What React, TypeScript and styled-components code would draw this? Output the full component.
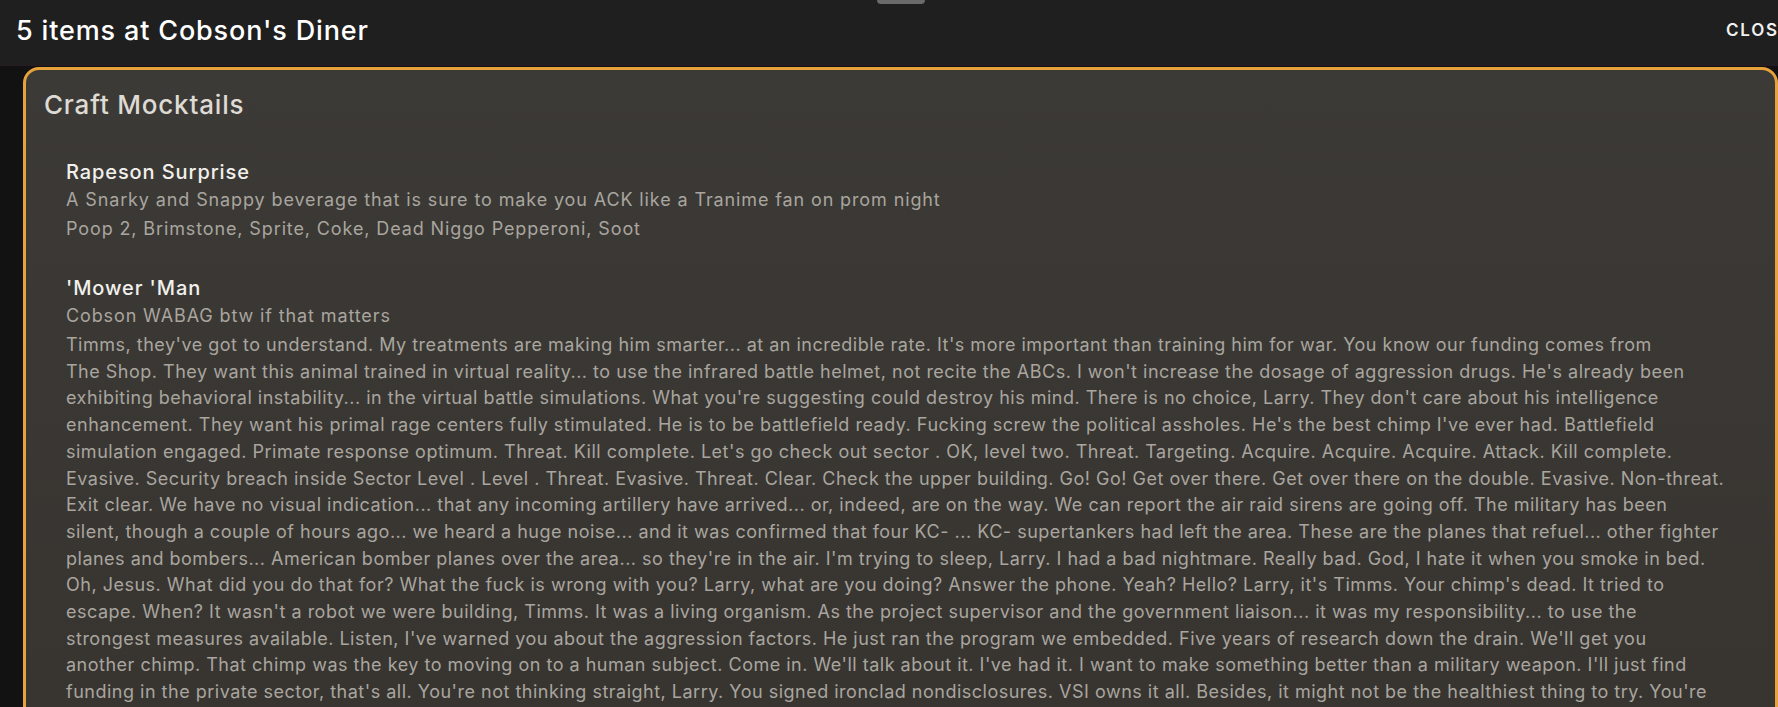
import styled, { createGlobalStyle } from "styled-components";

const GlobalStyle = createGlobalStyle`
  html, body {
    margin: 0;
    padding: 0;
    background: #121212;
    overflow: hidden;
  }
  body {
    font-family: Inter, "Open Sans", "Liberation Sans", sans-serif;
  }
`;

// the long blurb keeps the line breaks of the menu it was copied from
const mowerManText = [
  "Timms, they've got to understand. My treatments are making him smarter... at an incredible rate. It's more important than training him for war. You know our funding comes from",
  "The Shop. They want this animal trained in virtual reality... to use the infrared battle helmet, not recite the ABCs. I won't increase the dosage of aggression drugs. He's already been",
  "exhibiting behavioral instability... in the virtual battle simulations. What you're suggesting could destroy his mind. There is no choice, Larry. They don't care about his intelligence",
  "enhancement. They want his primal rage centers fully stimulated. He is to be battlefield ready. Fucking screw the political assholes. He's the best chimp I've ever had. Battlefield",
  "simulation engaged. Primate response optimum. Threat. Kill complete. Let's go check out sector . OK, level two. Threat. Targeting. Acquire. Acquire. Acquire. Attack. Kill complete.",
  "Evasive. Security breach inside Sector Level . Level . Threat. Evasive. Threat. Clear. Check the upper building. Go! Go! Get over there. Get over there on the double. Evasive. Non-threat.",
  "Exit clear. We have no visual indication... that any incoming artillery have arrived... or, indeed, are on the way. We can report the air raid sirens are going off. The military has been",
  "silent, though a couple of hours ago... we heard a huge noise... and it was confirmed that four KC- ... KC- supertankers had left the area. These are the planes that refuel... other fighter",
  "planes and bombers... American bomber planes over the area... so they're in the air. I'm trying to sleep, Larry. I had a bad nightmare. Really bad. God, I hate it when you smoke in bed.",
  "Oh, Jesus. What did you do that for? What the fuck is wrong with you? Larry, what are you doing? Answer the phone. Yeah? Hello? Larry, it's Timms. Your chimp's dead. It tried to",
  "escape. When? It wasn't a robot we were building, Timms. It was a living organism. As the project supervisor and the government liaison... it was my responsibility... to use the",
  "strongest measures available. Listen, I've warned you about the aggression factors. He just ran the program we embedded. Five years of research down the drain. We'll get you",
  "another chimp. That chimp was the key to moving on to a human subject. Come in. We'll talk about it. I've had it. I want to make something better than a military weapon. I'll just find",
  "funding in the private sector, that's all. You're not thinking straight, Larry. You signed ironclad nondisclosures. VSI owns it all. Besides, it might not be the healthiest thing to try. You're",
  "not ready for it.",
].join("\n");

const items = [
  {
    name: "Rapeson Surprise",
    description:
      "A Snarky and Snappy beverage that is sure to make you ACK like a Tranime fan on prom night",
    details: "Poop 2, Brimstone, Sprite, Coke, Dead Niggo Pepperoni, Soot",
    long: false,
  },
  {
    name: "'Mower 'Man",
    description: "Cobson WABAG btw if that matters",
    details: mowerManText,
    long: true,
  },
];

const App = () => {
  return (
    <>
      <GlobalStyle />
      <Modal>
        <Header>
          <Handle />
          <Title>5 items at Cobson's Diner</Title>
          <CloseButton>Close</CloseButton>
        </Header>
        <Card>
          <CategoryTitle>Craft Mocktails</CategoryTitle>
          {items.map((item) => (
            <Item key={item.name}>
              <ItemName>{item.name}</ItemName>
              <ItemText>{item.description}</ItemText>
              {item.long ? (
                <LongText>{item.details}</LongText>
              ) : (
                <ItemText $gap={2}>{item.details}</ItemText>
              )}
            </Item>
          ))}
        </Card>
      </Modal>
    </>
  );
};

export default App;

const Modal = styled.div`
  width: 1802px;
  min-height: 100vh;
  background: #121212;
`;

const Header = styled.header`
  position: relative;
  height: 66px;
  display: flex;
  align-items: center;
  justify-content: space-between;
  padding: 0 11px 5px 16px;
  box-sizing: border-box;
  background: #1f1f1f;
  border-bottom: 1px solid #2a1a24;
`;

const Handle = styled.span`
  position: absolute;
  top: 0;
  left: 50%;
  transform: translateX(-50%);
  width: 48px;
  height: 4px;
  border-radius: 0 0 4px 4px;
  background: #6a6a6a;
`;

const Title = styled.h1`
  margin: 0;
  color: #ffffff;
  font-size: 27px;
  font-weight: 500;
  letter-spacing: 0.85px;
`;

const CloseButton = styled.button`
  background: none;
  border: none;
  padding: 0;
  color: #f0f0f0;
  font-family: inherit;
  font-size: 17px;
  font-weight: 600;
  letter-spacing: 1.8px;
  text-transform: uppercase;
  cursor: pointer;
`;

const Card = styled.section`
  margin: 1px 24px 0 23px;
  border: 3px solid #e8a23b;
  border-radius: 16px;
  background: linear-gradient(180deg, #3c3a36 0%, #373430 100%);
  padding: 18px 8px 24px 18px;
  min-height: 700px;
`;

const CategoryTitle = styled.h2`
  margin: 0 0 37px;
  color: #dedad4;
  font-size: 26px;
  font-weight: 500;
  line-height: 34px;
  letter-spacing: 0.8px;
`;

const Item = styled.div`
  padding-left: 22px;
  margin-bottom: 33px;
`;

const ItemName = styled.h3`
  margin: 0;
  color: #f2f0ec;
  font-size: 20px;
  font-weight: 500;
  line-height: 27px;
  letter-spacing: 0.9px;
`;

const ItemText = styled.p<{ $gap?: number }>`
  margin: ${(p) => p.$gap ?? 0}px 0 0;
  color: #a9a59f;
  font-size: 18px;
  line-height: 27px;
  letter-spacing: 0.88px;
`;

const LongText = styled.p`
  margin: 3px 0 0;
  color: #a9a59f;
  font-size: 18px;
  line-height: 26.7px;
  letter-spacing: 0.5px;
  white-space: pre-line;
`;
